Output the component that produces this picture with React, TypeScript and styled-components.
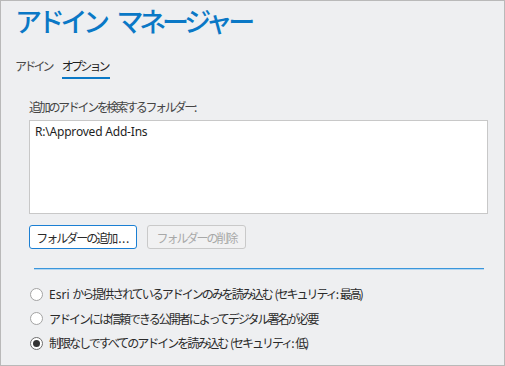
import React from 'react';
import styled, { createGlobalStyle } from 'styled-components';

const Global = createGlobalStyle`
  html, body { margin: 0; padding: 0; background: #eeeff1; }
  body { font-family: "Noto Sans CJK JP", "Noto Sans", sans-serif; color: #2f2f2f; }
`;

const Frame = styled.div`
  width: 505px;
  height: 366px;
  box-sizing: border-box;
  border: 1px solid #b9b9b9;
  background: #eeeff1;
  display: flex;
  flex-direction: column;
  padding-left: 14px;
  overflow: hidden;
`;

const Title = styled.h1`
  margin: 0;
  font-size: 27px;
  line-height: 40px;
  font-weight: 500;
  letter-spacing: -4.3px;
  word-spacing: 9px;
  color: #0a78c6;
  white-space: nowrap;
`;

const Tabs = styled.div`
  display: flex;
  gap: 8px;
  margin-top: 17px;
`;

const Tab = styled.div<{ $active?: boolean }>`
  font-size: 12px;
  line-height: 16px;
  letter-spacing: -2.8px;
  padding-bottom: 3px;
  padding-right: 2px;
  border-bottom: 2px solid ${p => (p.$active ? '#0a78c6' : 'transparent')};
  color: ${p => (p.$active ? '#1e1e1e' : '#4a4a4a')};
`;

const Content = styled.div`
  display: flex;
  flex-direction: column;
  padding-left: 14px;
`;

const Label = styled.div`
  margin-top: 20px;
  font-size: 12px;
  line-height: 16px;
  letter-spacing: -2.3px;
  color: #444;
`;

const FolderList = styled.div`
  margin-top: 5px;
  width: 459px;
  height: 94px;
  box-sizing: border-box;
  border: 1px solid #c8c8c8;
  background: #fff;
  padding: 3px 5px;
`;

const FolderItem = styled.div`
  font-family: "Noto Sans", sans-serif;
  font-size: 12px;
  line-height: 16px;
  letter-spacing: -0.2px;
  color: #1e1e1e;
`;

const ButtonRow = styled.div`
  display: flex;
  gap: 10px;
  margin-top: 11px;
`;

const Button = styled.button<{ $w: number }>`
  width: ${p => p.$w}px;
  height: 24px;
  box-sizing: border-box;
  border-radius: 3px;
  font-family: "Noto Sans CJK JP", sans-serif;
  font-size: 12px;
  letter-spacing: -2px;
  padding: 0;
  border: 1px solid ${p => (p.disabled ? '#c9c9c9' : '#1b7fd3')};
  background: ${p => (p.disabled ? '#f1f1f2' : '#ffffff')};
  color: ${p => (p.disabled ? '#a8a8a8' : '#2a2a2a')};
`;

const Dots = styled.span`
  letter-spacing: 0.5px;
  margin-left: 2px;
`;

const Separator = styled.div`
  margin-top: 19px;
  margin-left: 5px;
  width: 450px;
  height: 1px;
  background: #3a96dc;
  border-bottom: 1px solid #b4d6f0;
`;

const RadioList = styled.div`
  display: flex;
  flex-direction: column;
  margin-top: 12px;
`;

const RadioRow = styled.div`
  display: flex;
  align-items: center;
  height: 24.5px;
  gap: 6px;
  padding-left: 1px;
`;

const Circle = styled.span<{ $checked?: boolean }>`
  width: 13px;
  height: 13px;
  box-sizing: border-box;
  border-radius: 50%;
  border: 1px solid ${p => (p.$checked ? '#6e6e6e' : '#a3a3a3')};
  background: #fff;
  display: flex;
  align-items: center;
  justify-content: center;
  &::after {
    content: '';
    width: 7px;
    height: 7px;
    border-radius: 50%;
    background: ${p => (p.$checked ? '#333' : 'transparent')};
  }
`;

const RadioText = styled.span`
  font-size: 12px;
  line-height: 16px;
  letter-spacing: -2px;
  word-spacing: 2px;
  color: #2a2a2a;
  white-space: nowrap;
`;

const Latin = styled.span`
  letter-spacing: 0;
  font-family: "Noto Sans", sans-serif;
`;

export default function App() {
  return (
    <>
      <Global />
      <Frame>
        <Title>アドイン マネージャー</Title>
        <Tabs>
          <Tab>アドイン</Tab>
          <Tab $active>オプション</Tab>
        </Tabs>
        <Content>
          <Label>追加のアドインを検索するフォルダー:</Label>
          <FolderList>
            <FolderItem>R:\Approved Add-Ins</FolderItem>
          </FolderList>
          <ButtonRow>
            <Button $w={108}>フォルダーの追加<Dots>...</Dots></Button>
            <Button $w={99} disabled>フォルダーの削除</Button>
          </ButtonRow>
          <Separator />
          <RadioList>
            <RadioRow>
              <Circle />
              <RadioText><Latin>Esri</Latin> から提供されているアドインのみを読み込む (セキュリティ: 最高)</RadioText>
            </RadioRow>
            <RadioRow>
              <Circle />
              <RadioText>アドインには信頼できる公開者によってデジタル署名が必要</RadioText>
            </RadioRow>
            <RadioRow>
              <Circle $checked />
              <RadioText>制限なしですべてのアドインを読み込む (セキュリティ: 低)</RadioText>
            </RadioRow>
          </RadioList>
        </Content>
      </Frame>
    </>
  );
}
